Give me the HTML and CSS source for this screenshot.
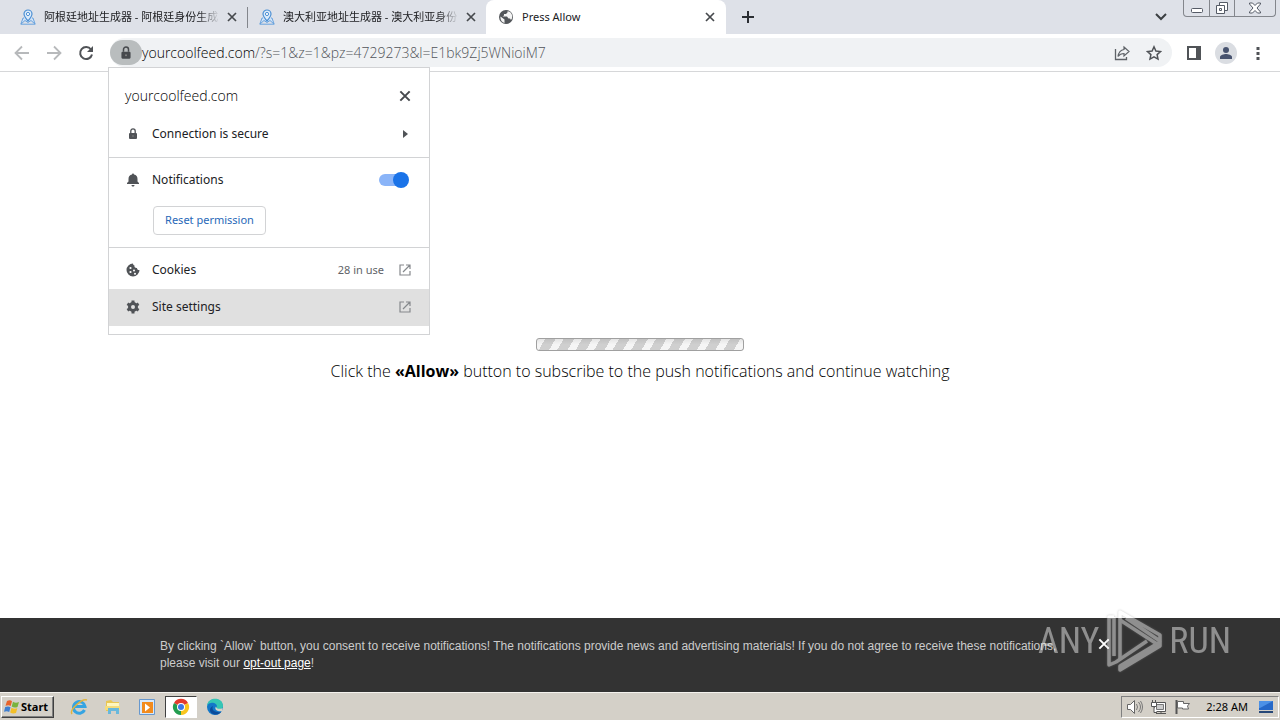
FILE: index.html
```html
<!DOCTYPE html>
<html lang="en">
<head>
<meta charset="utf-8">
<title>Press Allow</title>
<link rel="stylesheet" href="styles.css">
</head>
<body>
<svg class="defs" aria-hidden="true">
  <symbol id="close" viewBox="0 0 12 12"><path d="M2 2l8 8M10 2l-8 8" fill="none" stroke="currentColor" stroke-width="1.700"/></symbol>
  <symbol id="lock" viewBox="0 0 14 14"><path d="M4 6h6a1 1 0 0 1 1 1v4a1 1 0 0 1-1 1H4a1 1 0 0 1-1-1V7a1 1 0 0 1 1-1z" fill="currentColor"/><path d="M4.800 6V4a2.200 2.200 0 0 1 4.400 0v2" fill="none" stroke="currentColor" stroke-width="1.300"/><circle cx="7" cy="9" r=".8" fill="#888"/></symbol>
  <symbol id="map" viewBox="0 0 16 16"><path d="M4 9H3L.8 15.200h14.400L13 9h-1M1 15l4-3.500 3 2 3-2 4 3.500" fill="#cfe2f7" stroke="#69a3dd" stroke-width="1"/><path d="M8 12C5.500 9 4 7 4 5a4 4 0 0 1 8 0c0 2-1.500 4-4 7z" fill="#dcebfa" stroke="#4b8fd4" stroke-width="1.200"/><circle cx="8" cy="5" r="1.600" fill="#fff" stroke="#4b8fd4"/></symbol>
  <symbol id="launch" viewBox="0 0 12 12"><path d="M5 1H1v10h10V7M7 1h4v4M11 1L4 8" fill="none" stroke="currentColor" stroke-width="1.200"/></symbol>
</svg>

<header class="browser">
  <div class="tabstrip">
    <div class="tab">
      <svg class="favicon"><use href="#map"/></svg>
      <span class="tab-title fade">阿根廷地址生成器 - 阿根廷身份生成</span>
      <button class="icon-btn" aria-label="Close tab"><svg class="x"><use href="#close"/></svg></button>
    </div>
    <div class="tab divided">
      <svg class="favicon"><use href="#map"/></svg>
      <span class="tab-title fade">澳大利亚地址生成器 - 澳大利亚身份</span>
      <button class="icon-btn" aria-label="Close tab"><svg class="x"><use href="#close"/></svg></button>
    </div>
    <div class="tab active">
      <svg class="favicon" viewBox="0 0 16 16"><circle cx="8" cy="8" r="7" fill="#53565a"/><path d="M2.500 7.500l4 3v3.500C4 13.500 2 11 2.500 7.500zM9.500 2.200v1.300L8 5H6v1.500L4.500 7.500H9l1.500 2H12l1 1.500c1.200-1.500 1.500-3 1-5-.6-2-2-3.500-4.500-3.800z" fill="#f4f4f4"/></svg>
      <span class="tab-title">Press Allow</span>
      <button class="icon-btn" aria-label="Close tab"><svg class="x"><use href="#close"/></svg></button>
    </div>
    <button class="icon-btn new-tab" aria-label="New tab"><svg width="12" height="12"><path d="M6 0v12M0 6h12" stroke="#2b2e33" stroke-width="2"/></svg></button>
    <button class="icon-btn tab-search" aria-label="Search tabs"><svg width="12" height="8"><path d="M1 1l5 5 5-5" fill="none" stroke="#3c4043" stroke-width="2"/></svg></button>
    <div class="window-controls">
      <button aria-label="Minimize"><svg width="14" height="12"><rect x="1.500" y="6.500" width="11" height="4" rx="1" fill="#fff" stroke="#555b66"/></svg></button>
      <button aria-label="Restore"><svg width="14" height="14"><path d="M4.500 1.500h8v8h-8z" fill="#fff" stroke="#555b66"/><path d="M1.500 4.500h8v8h-8z" fill="#fff" stroke="#555b66"/><path d="M4.500 7.500h2v2h-2z" fill="none" stroke="#555b66"/></svg></button>
      <button class="wide" aria-label="Close window"><svg width="14" height="12"><path d="M1.500 1h3L7 3.500 9.500 1h3v1L9 6l3.500 4v1h-3L7 8.500 4.500 11h-3v-1L5 6 1.500 2z" fill="#fff" stroke="#555b66"/></svg></button>
    </div>
  </div>

  <div class="toolbar">
    <button class="icon-btn nav" aria-label="Back"><svg width="16" height="16"><path d="M15 8H2M8 1.500L1.500 8 8 14.500" fill="none" stroke="#b7b9bb" stroke-width="1.800"/></svg></button>
    <button class="icon-btn nav" aria-label="Forward"><svg width="16" height="16"><path d="M1 8h13M8 1.500L14.500 8 8 14.500" fill="none" stroke="#b7b9bb" stroke-width="1.800"/></svg></button>
    <button class="icon-btn nav" aria-label="Reload"><svg width="16" height="16"><path d="M13 4.500A6 6 0 1 0 14 9.500" fill="none" stroke="#505357" stroke-width="2"/><path d="M15 1v6H9z" fill="#505357"/></svg></button>
    <div class="omnibox">
      <button class="site-info" aria-label="View site information"><svg width="16" height="16"><use href="#lock"/></svg></button>
      <div class="url" role="textbox" aria-label="Address bar" tabindex="0"><b>yourcoolfeed.com</b>/?s=1&amp;z=1&amp;pz=4729273&amp;l=E1bk9Zj5WNioiM7</div>
      <button class="icon-btn" aria-label="Share"><svg width="16" height="16"><path d="M1.500 4v10.500h11V12" fill="none" stroke="#5f6368" stroke-width="1.300"/><path d="M10 2l5 4.500-5 4.500V8.500C7.500 8.500 5.500 9.500 4 11.500 4.500 8 6.500 5 10 4.500z" fill="none" stroke="#5f6368" stroke-width="1.200"/></svg></button>
      <button class="icon-btn" aria-label="Bookmark"><svg width="16" height="16"><path d="M8 1.800l1.900 4.200 4.600.5-3.400 3.100.9 4.500L8 11.800l-4 2.300.9-4.500L1.500 6.500 6.100 6z" fill="none" stroke="#505357" stroke-width="1.500"/></svg></button>
    </div>
    <button class="icon-btn panel" aria-label="Side panel"><svg width="14" height="14"><path d="M1 1h12v12H1z" fill="none" stroke="#505357" stroke-width="2"/><path d="M9 1h4v12H9z" fill="#505357"/></svg></button>
    <button class="icon-btn profile" aria-label="Profile"><svg width="14" height="14"><circle cx="7" cy="4" r="3" fill="#47536f"/><path d="M1 13v-2c0-2 4-3 6-3s6 1 6 3v2z" fill="#47536f"/></svg></button>
    <button class="icon-btn more" aria-label="Menu"><svg width="4" height="14"><path d="M.5 1h3v3h-3zM.5 6h3v3h-3zM.5 11h3v3h-3z" fill="#505357"/></svg></button>
  </div>

  <section class="popup" aria-label="Site information">
    <div class="popup-head"><h2>yourcoolfeed.com</h2><button class="icon-btn" aria-label="Close"><svg width="14" height="14"><use href="#close"/></svg></button></div>
    <button class="row secure"><svg class="lead" width="14" height="14"><use href="#lock"/></svg><span>Connection is secure</span><svg class="trail" width="12" height="10"><path d="M4 1l5 4-5 4z" fill="#505357"/></svg></button>
    <div class="permission">
      <label class="row"><svg class="lead" width="14" height="14"><path d="M1 11h12v-1l-1.500-1.500V6c0-2.500-1.200-4-3.500-4.500C8 0 6 0 6 1.500 3.700 2 2.500 3.500 2.500 6v2.500L1 10zM5.500 12h3c0 2-3 2-3 0z" fill="#505357"/></svg><span>Notifications</span><input class="switch" type="checkbox" role="switch" checked></label>
      <button class="reset">Reset permission</button>
    </div>
    <button class="row cookies"><svg class="lead" width="14" height="14"><path d="M7 .5A6.500 6.500 0 1 0 13.500 7c-1.500.3-2.500-.6-2.500-2-1.800.2-3-1-2.500-2.500C7.500 2.300 7 1.500 7 .5z" fill="#505357"/><g fill="#fff"><circle cx="4.500" cy="5" r="1.100"/><circle cx="4.500" cy="9" r="1.100"/><circle cx="8" cy="7.500" r="1"/><circle cx="9" cy="10.700" r="1"/></g></svg><span>Cookies</span><small>28 in use</small><svg class="trail" width="12" height="12"><use href="#launch"/></svg></button>
    <button class="row settings"><svg class="lead" width="14" height="14"><circle cx="7" cy="7" r="3.500" fill="none" stroke="#505357" stroke-width="3"/><path d="M7 .5v2.500M7 11v2.500M1.400 3.800l2 1.200M10.600 9l2 1.200M1.400 10.200l2-1.200M10.600 5l2-1.200" stroke="#505357" stroke-width="3"/></svg><span>Site settings</span><svg class="trail" width="12" height="12"><use href="#launch"/></svg></button>
  </section>
</header>

<main class="page">
  <div class="loader" role="progressbar" aria-label="Loading"></div>
  <p>Click the <strong>«Allow»</strong> button to subscribe to the push notifications and continue watching</p>
</main>

<footer class="consent">
  <p>By clicking `Allow` button, you consent to receive notifications! The notifications provide news and advertising materials! If you do not agree to receive these notifications, please visit our <a href="#">opt-out page</a>!</p>
  <button class="icon-btn" aria-label="Dismiss"><svg width="14" height="14"><use href="#close"/></svg></button>
  <div class="watermark">
    <span class="any">ANY</span>
    <svg width="58" height="64" viewBox="0 0 58 64"><g fill="none" stroke="currentColor" stroke-width="3.500" stroke-linejoin="round"><path d="M8 8H3v48l7-3 31-21M8 8v39"/><path d="M14 51V3l40 23v6L20 9"/><path d="M14 11l37 24-37 22v4l40-24v-4L14 57"/></g></svg>
    <span>RUN</span>
  </div>
</footer>

<nav class="taskbar" aria-label="Taskbar">
  <button class="start"><svg width="18" height="16"><path d="M4 2c2-1 4-1 5 .3L7.700 7C6.500 6 4.500 6 2.500 6.800z" fill="#e8632a"/><path d="M10 2.800c2 1.200 4 1 6 .2L14.500 8c-2 .8-4 .7-5.800-.5z" fill="#79b33c"/><path d="M2.200 8c2-.8 4-.8 5.300.3L6.200 13c-1.500-1-3.500-1-5.200-.2z" fill="#3f7fd0"/><path d="M8.500 8.800c1.800 1 3.800 1.200 5.800.4L13 14c-2 .8-4 .6-5.800-.4z" fill="#f3bf27"/></svg>Start</button>
  <button class="task" aria-label="Internet Explorer"><svg width="18" height="18"><path d="M14.500 12A5.800 5.800 0 1 1 15 8.500H5" fill="none" stroke="#35a4e2" stroke-width="3"/><path d="M2 16C-1 12 12 0 17 2" fill="none" stroke="#e3b43c" stroke-width="1.500"/></svg></button>
  <button class="task" aria-label="File Explorer"><svg width="18" height="18"><path d="M2 3l5-1 2 2h6v9H2z" fill="#e9c653"/><path d="M3 5h12v3H3z" fill="#fff6bd"/><path d="M1 8h15v4H1z" fill="#f4dc7c"/><path d="M4 10h11v6h-3v-3H7v3H4z" fill="#69b8dc"/></svg></button>
  <button class="task" aria-label="Media Player"><svg width="18" height="18"><path d="M1.500 1.500h15v15h-15z" fill="#d7e8fa" stroke="#6798ce"/><path d="M4 4h11v11H4z" fill="#f28b1d"/><path d="M7 5.500l5 4-5 4z" fill="#fff"/></svg></button>
  <button class="task open" aria-label="Chrome"><svg width="18" height="18"><path d="M9 9L2 5a8 8 0 0 1 14 0z" fill="#e33b2e"/><path d="M9 9l7-4a8 8 0 0 1-7 12z" fill="#f9c51d"/><path d="M9 9v8A8 8 0 0 1 2 5z" fill="#239d50"/><circle cx="9" cy="9" r="4" fill="#fff"/><circle cx="9" cy="9" r="3" fill="#3b78e7"/></svg></button>
  <button class="task" aria-label="Edge"><svg width="18" height="18"><circle cx="9" cy="9" r="8" fill="#1377c8"/><path d="M1 8C2-2 17-1 17 8c0 4-5 4-7 2 3-3-2-6-5-5-2 0-3 1-4 3z" fill="#35c6b4"/><path d="M7 8c-2 4 2 7 8 6-4 5-11 2-11-2 0-2 1-3 3-4z" fill="#0b4b9b"/><path d="M10 8.500c0 2.500 4 3 6.500 1.500v3c-4 1-9-1-6.500-4.500z" fill="#d6d2ca"/></svg></button>
  <div class="tray">
    <svg width="18" height="16"><path d="M1.500 5.500h3l4-4v13l-4-4h-3z" fill="#fff" stroke="#666"/><path d="M10.500 5q2 3 0 6M12.500 3q4 5 0 10M14.500 2q4 6 0 12" fill="none" stroke="#777"/></svg>
    <svg width="18" height="16"><path d="M4.500 3.500h11v9h-11z" fill="#fff" stroke="#555"/><path d="M6.500 5.500h7v5h-7z" fill="#ccc" stroke="#777"/><path d="M6 14.500h10M11 12.500v2" stroke="#555"/><path d="M2.500 1v3M5.500 1v3M1.500 3.500h5v4h-5zM4 8v5.500h3" fill="#fff" stroke="#555"/></svg>
    <svg width="18" height="16"><path d="M2.500 1v14" stroke="#555" stroke-width="2"/><path d="M3.500 2.500h6v2h6l-2 2.500 1 3h-6v-1h-5z" fill="#fff" stroke="#666"/></svg>
    <time>2:28 AM</time>
    <svg width="16" height="14"><path d="M1 1h14v9H1z" fill="#2568c8"/><path d="M1 1h14L2 8H1z" fill="#4c91e6"/><path d="M1 11h14v2H1z" fill="#264777"/></svg>
  </div>
</nav>
</body>
</html>
```
FILE: styles.css
```css
* { box-sizing: border-box; }
body { margin: 0; min-height: 100vh; display: flex; flex-direction: column; background: #fff; color: #202124; font: 12px/16px "Noto Sans", "Noto Sans CJK SC", sans-serif; }
button { font: inherit; color: inherit; border: 0; background: none; padding: 0; }
svg { display: block; flex: none; }
.defs { position: absolute; width: 0; height: 0; }
.icon-btn { display: flex; align-items: center; justify-content: center; flex: none; color: #46494d; }
.browser { position: relative; border-bottom: 1px solid #d6d7d9; }

.tabstrip { display: flex; align-items: center; height: 34px; padding-left: 8px; background: #dee1e8; }
.tab { display: flex; align-items: center; gap: 8px; width: 239px; height: 34px; padding: 0 7px 0 12px; }
.tab .icon-btn { width: 16px; height: 16px; margin-left: -4px; }
.tab.divided { border-left: 1px solid #83868c; border-image: linear-gradient(transparent 8px, #83868c 8px, #83868c 27px, transparent 27px) 1; padding-left: 11px; }
.tab.active { width: 240px; padding-right: 8px; background: #fff; border-radius: 8px 8px 0 0; }
.favicon { width: 16px; height: 16px; }
.x { width: 12px; height: 12px; }
.tab-title { flex: 1; min-width: 0; overflow: hidden; white-space: nowrap; font-size: 11px; }
.fade { -webkit-mask-image: linear-gradient(90deg, #000 88%, transparent); mask-image: linear-gradient(90deg, #000 88%, transparent); }
.new-tab { width: 28px; height: 28px; margin-left: 8px; }
.tab-search { width: 28px; height: 28px; margin-left: auto; margin-right: 8px; }
.window-controls { display: flex; align-self: flex-start; height: 17px; margin-right: 4px; border: 1px solid #83868c; border-top: 0; border-radius: 0 0 4px 4px; }
.window-controls button { display: flex; align-items: center; justify-content: center; width: 25px; }
.window-controls button + button { border-left: 1px solid #83868c; }
.window-controls .wide { width: 41px; }

.toolbar { display: flex; align-items: center; height: 37px; padding: 0 12px 0 6px; }
.nav { width: 32px; height: 32px; }
.omnibox { display: flex; align-items: center; flex: 1; height: 29px; margin-left: 8px; padding-right: 2px; border-radius: 15px; background: #f0f2f4; }
.omnibox .icon-btn { width: 32px; height: 28px; }
.site-info { display: flex; align-items: center; justify-content: center; width: 32px; height: 25px; border-radius: 13px; background: #b9bdbe; color: #46494d; }
.url { flex: 1; color: #505459; font-family: "Open Sans", sans-serif; font-weight: 300; font-size: 14px; line-height: 20px; white-space: nowrap; }
.url b { font-weight: 300; color: #000; }
.panel { width: 32px; height: 28px; margin-left: 6px; }
.profile { width: 22px; height: 22px; margin-left: 5px; border-radius: 50%; background: #dadde2; }
.more { width: 20px; height: 28px; margin-left: 11px; }

.popup { position: absolute; z-index: 2; left: 108px; top: 67px; width: 322px; padding: 9px 0 8px; background: #fff; border: 1px solid #d2d3d5; }
.popup-head { display: flex; align-items: center; justify-content: space-between; height: 37px; padding: 0 17px 0 16px; }
.popup h2 { margin: 0; font-family: "Open Sans", sans-serif; font-weight: 300; font-size: 14px; line-height: 20px; color: #000; }
.row { display: flex; align-items: center; width: 100%; height: 37px; padding: 0 18px 0 17px; text-align: left; }
.row span { flex: 1; margin-left: 12px; }
.row small { margin-right: 15px; font-size: 11px; color: #5f6368; }
.lead { color: #505357; }
.trail { color: #85888c; }
.secure { margin: 1px 0 5px; }
.permission { border: solid #d2d3d5; border-width: 1px 0; padding: 3px 0 12px; margin-bottom: 3px; }
.permission .row { padding-right: 20px; }
.reset { display: block; width: 113px; height: 29px; margin: 8px 0 0 44px; padding-bottom: 2px; border: 1px solid #d2d3d5; border-radius: 4px; color: #2868b8; font-size: 11px; }
.switch { appearance: none; position: relative; width: 30px; height: 16px; margin: 0; }
.switch::before { content: ""; position: absolute; left: 0; top: 2px; width: 28px; height: 12px; border-radius: 6px; background: #8ab4f8; }
.switch::after { content: ""; position: absolute; right: 0; top: 0; width: 16px; height: 16px; border-radius: 50%; background: #1a73e8; }
.cookies { margin-bottom: 1px; }
.settings { padding-bottom: 2px; background: #e0e0e0; }

.page { flex: 1; display: flex; flex-direction: column; align-items: center; justify-content: center; color: #000; font-family: "Open Sans", sans-serif; font-weight: 300; }
.loader { width: 208px; height: 13px; margin-top: 30px; border: 1px solid #a0a0a0; border-radius: 3px; background: linear-gradient(#0001, transparent 50%), repeating-linear-gradient(120deg, #f5f5f5 0 7px, #cfcfcf 7px 16px); }
.page p { margin: 8px 0 0; font-size: 16px; line-height: 24px; }
.page strong { font-weight: 700; }

.consent { position: relative; display: flex; align-items: center; height: 74px; padding: 0 160px; background: #333; color: #ccc; font: 12px/17px "Liberation Sans", Arial, sans-serif; }
.consent p { flex: 1; margin: 0; max-width: 920px; }
.consent a { color: #fff; }
.consent .icon-btn { width: 14px; height: 14px; margin: 0 9px 22px auto; color: #fff; }
.watermark { position: absolute; right: 49px; bottom: 19px; display: flex; align-items: center; gap: 5px; color: #fff; opacity: .45; pointer-events: none; font: 36px/40px "Liberation Sans Narrow", "Roboto Condensed", sans-serif; }
.any { margin-right: 2px; }
.watermark svg { filter: drop-shadow(0 0 1px #888); }

.taskbar { display: flex; align-items: center; height: 28px; padding: 0 1px; background: #d4d0c8; border-top: 1px solid #f4f2ee; color: #000; font: 11px/16px "Noto Sans", sans-serif; }
.start { display: flex; align-items: center; width: 53px; height: 22px; padding-left: 1px; margin-right: 9px; border: 1px solid; border-color: #fff #404040 #404040 #fff; box-shadow: inset -1px -1px #808080; font-weight: 700; }
.task { display: flex; align-items: center; justify-content: center; width: 32px; height: 22px; margin-right: 2px; }
.task.open { background: #fff; border: 1px solid; border-color: #404040 #fff #fff #404040; }
.tray { display: flex; align-items: center; gap: 6px; height: 22px; margin-left: auto; padding: 0 4px; border: 1px solid; border-color: #808080 #fff #fff #808080; }
.tray time { margin: 0 4px 0 8px; }
```
